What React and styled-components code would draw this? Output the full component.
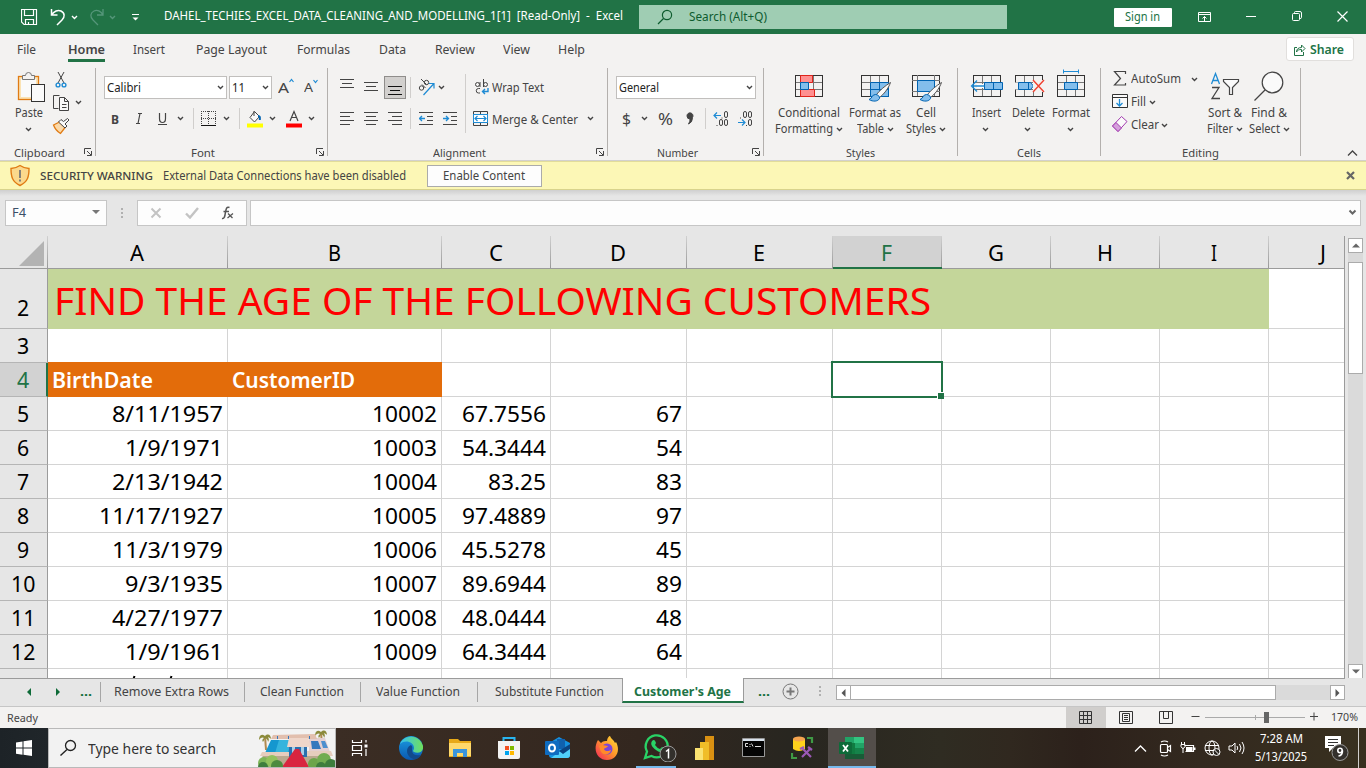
import React, { useLayoutEffect, useRef } from "react";
import styled, { createGlobalStyle, css } from "styled-components";

const Global = createGlobalStyle`
  * { box-sizing: border-box; }
  body { margin: 0; overflow: hidden; }
  svg { display: block; flex: none; }
`;

const ink = "#444444";
const green = "#217346";
const blue = "#1e8bd4";

const gap = css`margin-left: ${(p) => p.$ml || 0}px;`;

/* ---------- text ---------- */
const TextBox = styled.span`
  display: block;
  flex: none;
  width: ${(p) => p.$w}px;
  ${gap}
  margin-bottom: ${(p) => (p.$up || 0) * 2}px;
  height: ${(p) => Math.round(p.$size * 1.36)}px;
  line-height: ${(p) => Math.round(p.$size * 1.36)}px;
  font-size: ${(p) => p.$size}px;
  font-weight: ${(p) => p.$weight || 400};
  color: ${(p) => p.$color || "inherit"};
  white-space: pre;
`;
const Stretch = styled.span`
  display: inline-block;
  transform-origin: 0 50%;
`;
function Text({ w, size = 12, weight, color, ml, up, children }) {
  const ref = useRef(null);
  useLayoutEffect(() => {
    const el = ref.current;
    el.style.transform = "none";
    el.style.transform = `scaleX(${w / el.getBoundingClientRect().width})`;
  }, [w, children]);
  return (
    <TextBox $w={w} $size={size} $weight={weight} $color={color} $ml={ml} $up={up}>
      <Stretch ref={ref}>{children}</Stretch>
    </TextBox>
  );
}

/* ---------- icons ---------- */
const Svg = styled.svg`${gap}`;
function Icon({ x = 0, y = 0, w, h = 23, ml, stroke = ink, children }) {
  return (
    <Svg $ml={ml} width={w} height={h} viewBox={`${x} ${y} ${w} ${h}`} fill="none" stroke={stroke} strokeWidth="1">
      {children}
    </Svg>
  );
}
const Chevron = ({ ml, color = ink }) => (
  <Icon w={7} h={7} ml={ml} stroke={color}>
    <path d="M1 2l2.5 2.5L6 2" strokeWidth="1.4" />
  </Icon>
);

/* ---------- frame ---------- */
const Screen = styled.div`
  width: 1366px;
  height: 768px;
  display: flex;
  flex-direction: column;
  overflow: hidden;
  background: #e6e6e6;
  color: ${ink};
  font-family: "Noto Sans", "Open Sans", sans-serif;
`;
const TitleBar = styled.header`
  flex: none;
  height: 34px;
  background: ${green};
  color: #fff;
  display: flex;
  align-items: center;
`;
const SearchBox = styled.div`
  width: 368px;
  height: 24px;
  margin: 0 0 1px 16px;
  background: #9fcdb3;
  color: #0e5c2f;
  display: flex;
  align-items: center;
  padding-left: 18px;
`;
const SignIn = styled.button`
  width: 58px;
  height: 19px;
  margin: 0 0 0 107px;
  padding: 0 0 0 11px;
  border: 0;
  border-radius: 1px;
  background: #fff;
  color: ${green};
  font: inherit;
  display: flex;
  align-items: center;
`;

/* ---------- ribbon ---------- */
const Tabs = styled.nav`
  flex: none;
  height: 34px;
  background: #f3f2f1;
  display: flex;
  padding-left: 17px;
`;
const Tab = styled.div`
  height: 28px;
  padding-top: 8px;
  margin-right: ${(p) => p.$gap}px;
  border-bottom: 3px solid ${(p) => (p.$active ? green : "transparent")};
`;
const Share = styled.button`
  width: 68px;
  height: 24px;
  margin: 3px 0 0 701px;
  padding: 1px 0 0 7px;
  border: 1px solid #e1dfdd;
  border-radius: 3px;
  background: #fff;
  color: ${green};
  font: inherit;
  display: flex;
  align-items: center;
`;
const Ribbon = styled.section`
  flex: none;
  height: 93px;
  background: #f3f2f1;
  border-bottom: 1px solid #d2d0ce;
  display: flex;
`;
const Group = styled.div`
  flex: none;
  width: ${(p) => p.$w}px;
  height: 88px;
  border-right: 1px solid #b3b0ad;
  display: flex;
  flex-direction: column;
`;
const GroupBody = styled.div`
  flex: none;
  height: 76px;
  display: flex;
  align-items: flex-start;
  padding-left: ${(p) => p.$pl || 0}px;
`;
const GroupLabel = styled.div`
  flex: none;
  height: 16px;
  display: flex;
  align-items: center;
`;
const Stack = styled.div`
  display: flex;
  flex-direction: column;
  ${gap}
  padding-top: ${(p) => p.$pt || 0}px;
  gap: ${(p) => p.$gap || 0}px;
`;
const ToolRow = styled.div`
  height: 23px;
  display: flex;
  align-items: center;
  ${gap}
`;
const Combo = styled.div`
  width: ${(p) => p.$w}px;
  height: 23px;
  ${gap}
  padding-left: 2px;
  border: 1px solid #c1bfbd;
  background: #fff;
  color: #222;
  display: flex;
  align-items: center;
`;
const Toggle = styled.div`
  width: 22px;
  height: 23px;
  ${gap}
  border: 1px solid #8f8d8b;
  background: #d2d0ce;
  padding-left: 3px;
`;
const Divider = styled.i`
  width: 1px;
  height: ${(p) => p.$h || 21}px;
  ${gap}
  background: #d0cecc;
`;
const BigButton = styled.div`
  flex: none;
  width: ${(p) => p.$w}px;
  ${gap}
  display: flex;
  flex-direction: column;
  align-items: center;
`;
const BigLine = styled.div`
  height: 16px;
  display: flex;
  align-items: center;
`;
const ShortChevron = styled.div`
  padding-right: 2px;
`;
const Launcher = ({ ml }) => (
  <Icon w={8} h={8} ml={ml}>
    <path d="M.5 6V.5H7M3 3l4 4M7.5 3v4.5H3" />
  </Icon>
);
const Big = ({ w, ml, icon, lines }) => (
  <BigButton $w={w} $ml={ml}>
    {icon}
    {lines.map(([text, tw, chev], i) => (
      <BigLine key={i}>
        {text && <Text w={tw}>{text}</Text>}
        {chev && (text ? <Chevron ml={3} /> : <ShortChevron><Chevron /></ShortChevron>)}
      </BigLine>
    ))}
  </BigButton>
);

/* ---------- message bar and formula bar ---------- */
const Warning = styled.div`
  flex: none;
  height: 29px;
  background: #fcf7b6;
  border-bottom: 1px solid #d8d38c;
  border-top: 1px solid #e2dc9a;
  display: flex;
  align-items: center;
  padding-left: 9px;
`;
const EnableButton = styled.button`
  width: 115px;
  height: 22px;
  margin: 0 0 0 21px;
  padding: 0 0 0 15px;
  border: 1px solid #ababab;
  background: #fdfdfd;
  color: ${ink};
  font: inherit;
  display: flex;
  align-items: center;
`;
const FormulaBar = styled.div`
  flex: none;
  height: 46px;
  background: linear-gradient(#cfcfcf, #e6e6e6 6px);
  display: flex;
  padding: 10px 0 0 5px;
`;
const Field = styled.div`
  width: ${(p) => p.$w}px;
  height: 26px;
  ${gap}
  padding-left: ${(p) => p.$pl || 0}px;
  border: 1px solid #c6c6c6;
  background: #fdfdfd;
  display: flex;
  align-items: center;
`;

/* ---------- sheet ---------- */
const Sheet = styled.main`
  flex: none;
  height: 442px;
  display: flex;
`;
const Grid = styled.div`
  width: 1345px;
  overflow: hidden;
  border-right: 1px solid #9b9b9b;
  color: #000;
`;
const HeadRow = styled.div`
  width: 1378px;
  height: 33px;
  display: flex;
`;
const headLine = "linear-gradient(#d0d0d0, #999)";
const ColHead = styled.div`
  position: relative;
  width: ${(p) => p.$w}px;
  border-bottom: ${(p) => (p.$on ? `2px solid ${green}` : "1px solid #9b9b9b")};
  background: ${headLine} right / 1px 100% no-repeat, ${(p) => (p.$on ? "#d2d2d2" : "#e6e6e6")};
  color: ${(p) => (p.$on ? green : "#000")};
  display: flex;
  justify-content: center;
  align-items: center;
  padding: ${(p) => (p.$on ? 1 : 0)}px 2px 0 0;
`;
const Corner = styled.div`
  width: 48px;
  border-bottom: 1px solid #9b9b9b;
  background: ${headLine} right / 1px 100% no-repeat;
  padding: 5px 0 0 19px;
`;
const Row = styled.div`
  width: 1378px;
  height: ${(p) => p.$h}px;
  display: flex;
`;
const RowHead = styled.div`
  width: 48px;
  border-right: ${(p) => (p.$on ? `2px solid ${green}` : "1px solid #9b9b9b")};
  border-bottom: 1px solid #b5b5b5;
  background: ${(p) => (p.$on ? "#d2d2d2" : "#e6e6e6")};
  color: ${(p) => (p.$on ? green : "#000")};
  display: flex;
  justify-content: center;
  align-items: ${(p) => (p.$low ? "flex-end" : "center")};
  padding-bottom: ${(p) => (p.$low ? 4 : 0)}px;
`;
const Cell = styled.div`
  position: relative;
  width: ${(p) => p.$w}px;
  border-right: 1px solid #d4d4d4;
  border-bottom: 1px solid #d4d4d4;
  background: #fff;
  display: flex;
  justify-content: flex-end;
  align-items: center;
  padding-right: 4px;
`;
const Banner = styled.div`
  width: 1221px;
  background: #c4d69a;
  color: #ff0000;
  display: flex;
  align-items: center;
  padding: 1px 0 0 6px;
`;
const TableHead = styled.div`
  position: relative;
  width: ${(p) => p.$w}px;
  background: #e36c0a;
  box-shadow: 0 -1px #e36c0a;
  color: #fff;
  display: flex;
  align-items: center;
  padding-left: 4px;
`;
const Selection = styled.div`
  position: absolute;
  z-index: 2;
  inset: -2px;
  border: 2px solid ${green};
  &::after {
    content: "";
    position: absolute;
    right: -3px;
    bottom: -3px;
    width: 6px;
    height: 6px;
    background: ${green};
    border: solid #fff;
    border-width: 1px 0 0 1px;
  }
`;
const VScroll = styled.div`
  width: 15px;
  margin: 2px 0 0 3px;
  background: #dadada;
  display: flex;
  flex-direction: column;
`;
const ScrollPart = styled.div`
  flex: none;
  width: ${(p) => p.$w || 15}px;
  height: ${(p) => p.$h || 15}px;
  margin: ${(p) => p.$m || 0};
  border: 1px solid #ababab;
  background: #fff;
  display: flex;
  align-items: center;
  justify-content: center;
`;

/* ---------- sheet tabs and status ---------- */
const SheetBar = styled.div`
  flex: none;
  height: 29px;
  border-bottom: 1px solid #c6c6c6;
  background: linear-gradient(#9b9b9b, #9b9b9b) 0 0 / 1345px 1px no-repeat, #e6e6e6;
  display: flex;
  padding-left: 26px;
`;
const SheetNav = styled.div`
  width: 75px;
  height: 20px;
  margin-top: 4px;
  border-right: 1px solid #a6a6a6;
  display: flex;
  align-items: center;
`;
const SheetTab = styled.div`
  height: 20px;
  width: ${(p) => p.$w}px;
  margin-top: 4px;
  padding-left: ${(p) => p.$pl}px;
  border-right: ${(p) => (p.$last ? 0 : 1)}px solid #a6a6a6;
  display: flex;
  align-items: center;
`;
const ActiveTab = styled.div`
  width: 122px;
  height: 25px;
  padding: 4px 0 0 11px;
  background: #fff;
  border: solid #9b9b9b;
  border-width: 0 1px;
  border-bottom: 2px solid ${green};
  display: flex;
  align-items: center;
`;
const SheetTools = styled.div`
  height: 27px;
  display: flex;
  align-items: center;
`;
const HScroll = styled.div`
  width: 509px;
  height: 15px;
  ${gap}
  margin-top: 2px;
  background: #dadada;
  display: flex;
`;
const Status = styled.footer`
  flex: none;
  height: 21px;
  background: #f3f2f1;
  display: flex;
  align-items: center;
  padding-left: 7px;
`;
const ViewButton = styled.div`
  width: 40px;
  height: 21px;
  ${gap}
  background: ${(p) => (p.$on ? "#d0cecc" : "transparent")};
  display: flex;
  align-items: center;
  padding: 0 0 1px 13px;
`;

/* ---------- taskbar ---------- */
const Taskbar = styled.div`
  flex: none;
  height: 40px;
  background: linear-gradient(90deg, #1d2327 0, #20262a 48px, #3b2d24 336px, #33271f 640px, #282620 790px, #2f2c22 940px, #30281f 1010px, #2c211b 1080px, #33291f 1200px, #38301f 1366px);
  color: #fff;
  display: flex;
`;
const Start = styled.div`
  width: 48px;
  display: flex;
  align-items: center;
  justify-content: center;
`;
const TaskSearch = styled.div`
  width: 288px;
  border: 1px solid #b9b9b9;
  background: #f2f2f2;
  color: #333;
  display: flex;
  align-items: center;
  padding-left: 10px;
`;
const Task = styled.div`
  width: 48px;
  height: 40px;
  ${gap}
  background: ${(p) => (p.$on ? "#534e4a" : "transparent")};
  border-bottom: 2px solid ${(p) => (p.$on ? "#76b9ed" : "transparent")};
  display: flex;
  align-items: center;
  justify-content: center;
  padding: 1px 1px 0 0;
`;
const RunningTask = styled(Task)`
  background: linear-gradient(#76b9ed, #76b9ed) 4px 38px / 40px 2px no-repeat border-box;
`;
const Tray = styled.div`
  flex: 1;
  display: flex;
  align-items: center;
`;
const Clock = styled.div`
  width: 54px;
  ${gap}
  display: flex;
  flex-direction: column;
  align-items: center;
  gap: 2px;
`;

/* table grid shared by the Styles and Cells icons */
const TableGlyph = ({ x, y = 75.5, w = 27, h = 21 }) => (
  <g>
    <path d={`M${x} ${y + h / 3}h${w}M${x} ${y + (2 * h) / 3}h${w}M${x + w / 3} ${y}v${h}M${x + (2 * w) / 3} ${y}v${h}`} stroke="#777" />
    <rect x={x} y={y} width={w} height={h} stroke="#333" />
  </g>
);
const BrushGlyph = ({ x }) => (
  <g transform={`translate(${x} 0)`}>
    <path d="M29.500 82.500c-5 3-11 8-14 12l3 3c4-3 9-9 11-15z" fill="#fafafa" stroke="#555" />
    <path d="M14.500 94.500c-4 0-3 4-6.500 5 4 2.500 9 2 10.500-1 .5-2-1.500-4-4-4z" fill="#83beec" stroke="#0063b1" />
  </g>
);
const cols = [["A", 180], ["B", 214], ["C", 109], ["D", 136], ["E", 146], ["F", 109], ["G", 109], ["H", 109], ["I", 109], ["J", 109]];
const data = [
  [5, "8/11/1957", 111, "10002", "67.7556", 84, "67"],
  [6, "1/9/1971", 98, "10003", "54.3444", 84, "54"],
  [7, "2/13/1942", 111, "10004", "83.25", 58, "83"],
  [8, "11/17/1927", 124, "10005", "97.4889", 84, "97"],
  [9, "11/3/1979", 111, "10006", "45.5278", 84, "45"],
  [10, "9/3/1935", 98, "10007", "89.6944", 84, "89"],
  [11, "4/27/1977", 111, "10008", "48.0444", 84, "48"],
  [12, "1/9/1961", 98, "10009", "64.3444", 84, "64"],
];
const Num = ({ n }) => <Text size={22} up={1} w={String(n).length * 12.2}>{String(n)}</Text>;
const Empty = ({ from, to = 10, selected }) =>
  cols.slice(from, to).map(([c, w]) => <Cell key={c} $w={w}>{selected === c && <Selection />}</Cell>);
const ribbonTabs = [
  ["File", 19, 32], ["Home", 37, 28], ["Insert", 32, 31], ["Page Layout", 71, 30], ["Formulas", 53, 29],
  ["Data", 27, 29], ["Review", 40, 28], ["View", 27, 28], ["Help", 27, 0],
];

const Palm = ({ x, y }) => (
  <g stroke="none">
    <path d={`M${x} ${y}l1 14h2l-1-14z`} fill="#b08a50" />
    <path d={`M${x + 1} ${y}c-4-3-6 0-6 4 2-3 4-3 5-2-2 1-2 3-1 4 1-2 2-3 2-4 2 1 3 2 3 4 2-3 0-5-1-5 2 0 3 1 4 2 0-4-3-6-6-3z`} fill="#8b8a3a" />
  </g>
);

export default function App() {
  return (
    <Screen>
      <Global />
      <TitleBar>
        <Icon w={17} h={17} ml={21} stroke="#fff">
          <path d="M.5.5h15v15H3L.5 13zM3.500.5v6h9v-6M4.500 15.500v-5h8v5M7.500 13v2.500" strokeWidth="1.2" />
        </Icon>
        <Icon w={16} h={18} ml={12} stroke="#fff">
          <path d="M1.500 1v6h6M1.500 7C4 3 8 1.500 11 3c4 2 4 6 1 9l-5 5" strokeWidth="1.5" />
        </Icon>
        <Chevron ml={5} color="#fff" />
        <Icon w={16} h={18} ml={11} stroke="#55967a">
          <path d="M14 1v6H8M14 7C12 3 8 1.500 5 3c-4 2-4 6-1 9l5 5" strokeWidth="1.3" />
        </Icon>
        <Chevron ml={4} color="#55967a" />
        <Icon w={9} h={9} ml={15} stroke="#fff">
          <path d="M1 1.500h7" /><path d="M1.500 4.500h6l-3 3z" fill="#fff" stroke="none" />
        </Icon>
        <Text w={459} ml={24} up={1}>{"DAHEL_TECHIES_EXCEL_DATA_CLEANING_AND_MODELLING_1[1]  [Read-Only]  -  Excel"}</Text>
        <SearchBox>
          <Icon w={17} h={16} stroke="#0e5c2f">
            <circle cx="10" cy="6" r="4.600" strokeWidth="1.2" /><path d="M6.500 9.500L1 15" strokeWidth="1.2" />
          </Icon>
          <Text w={78} ml={15}>Search (Alt+Q)</Text>
        </SearchBox>
        <SignIn><Text w={35}>Sign in</Text></SignIn>
        <Icon w={14} h={11} ml={26} stroke="#fff">
          <path d="M.5.5h12v9H.5zM.5 2.500h12M6.500 9V4.500M4.500 6.500l2-2 2 2" />
        </Icon>
        <Icon w={10} h={13} ml={34} stroke="#fff"><path d="M0 5.500h10" /></Icon>
        <Icon w={11} h={13} ml={36} stroke="#fff">
          <rect x=".5" y="2.500" width="7" height="7" rx="1" /><path d="M2.500 2V1.500q0-1 1-1H8q1.500 0 1.500 1.500v4.500q0 1-1.500 1" />
        </Icon>
        <Icon w={11} h={13} ml={34} stroke="#fff"><path d="M.5.5l10 10M10.500.5l-10 10" strokeWidth="1.2" /></Icon>
      </TitleBar>

      <Tabs>
        {ribbonTabs.map(([t, w, g]) => (
          <Tab key={t} $gap={g} $active={t === "Home"}><Text w={w} weight={t === "Home" ? 600 : 400}>{t}</Text></Tab>
        ))}
        <Share>
          <Icon w={12} h={12} stroke={green}>
            <path d="M3 3.500H.5v8h9V8M2.500 8c0-3 2-4.500 5-4.500V1L11 4.500 7.500 8V5.500C5 5.500 3.500 6 2.500 8z" />
          </Icon>
          <Text w={34} weight={600} ml={4}>Share</Text>
        </Share>
      </Tabs>

      <Ribbon>
        <Group $w={96}>
          <GroupBody $pl={12}>
            <Big w={34} lines={[["Paste", 28], ["", 0, true]]} icon={
              <Icon x={12} y={68} w={34} h={37}>
                <rect x="18.500" y="76.500" width="20" height="23" fill="#fbe3b4" stroke="#e07b14" strokeWidth="1.300" />
                <rect x="21" y="79" width="15" height="18" fill="#fafafa" stroke="none" />
                <path d="M22.500 79.500v-4h3q0-3 3-3t3 3h3v4z" fill="#f3f2f1" stroke="#777" />
                <rect x="31.500" y="84.500" width="13" height="17" fill="#fafafa" stroke="#333" />
              </Icon>} />
            <Stack $ml={6}>
              <ToolRow>
                <Icon x={52} y={68} w={18}>
                  <path d="M58 72l6 11M64 72l-6 11" />
                  <circle cx="58" cy="85" r="1.900" stroke={blue} strokeWidth="1.400" /><circle cx="64" cy="85" r="1.900" stroke={blue} strokeWidth="1.400" />
                </Icon>
              </ToolRow>
              <ToolRow>
                <Icon x={52} y={91} w={18}>
                  <path d="M58.500 108.500h-5v-13h6" />
                  <path d="M59.500 97.500h5l4 4v9h-9zM64.500 97.500v4h4M62 104.500h4.500M62 107.500h4.500" fill="#fafafa" />
                </Icon>
                <Chevron ml={5} />
              </ToolRow>
              <ToolRow>
                <Icon x={52} y={114} w={18}>
                  <path d="M53.500 125l6-3 6 5-5 6.500q-5-3-7-8.500z" fill="#fbd9a8" stroke="#e07b14" strokeWidth="1.300" />
                  <path d="M58.500 122l6.500 6 2-2-2-2 4-4-1.500-1.500-4 3-2.500-2z" fill="#fafafa" />
                </Icon>
              </ToolRow>
            </Stack>
          </GroupBody>
          <GroupLabel><Text w={51} ml={14} size={11}>Clipboard</Text><Launcher ml={19} /></GroupLabel>
        </Group>

        <Group $w={232}>
          <GroupBody $pl={8}>
            <Stack $pt={8} $gap={8}>
              <ToolRow>
                <Combo $w={123}><Text w={34}>Calibri</Text><Chevron ml={76} /></Combo>
                <Combo $w={43} $ml={2}><Text w={13}>11</Text><Chevron ml={17} /></Combo>
                <Text w={11} size={15} ml={6} up={1}>A</Text>
                <Icon x={289} y={76} w={6} stroke={blue}><path d="M289.500 82l2-2.500 2 2.500" strokeWidth="1.200" /></Icon>
                <Text w={9} size={13} ml={9} up={1}>A</Text>
                <Icon x={312} y={76} w={6}  stroke={blue}><path d="M312.500 80l2 2.500 2-2.500" strokeWidth="1.200" /></Icon>
              </ToolRow>
              <ToolRow>
                <Text w={8} ml={7} size={13} weight={700}>B</Text>
                <Icon x={134} y={107} w={10} ml={15}><path d="M138 113.500h4M136 123.500h4M140 113.500l-2 10" strokeWidth="1.200" /></Icon>
                <Icon x={157} y={107} w={11} ml={13}><path d="M159.500 113v5.500q0 4 3 4t3-4V113M158 124.500h9" strokeWidth="1.200" /></Icon>
                <Chevron ml={9} />
                <Divider $ml={9} />
                <Icon x={201} y={107} w={16} ml={7}>
                  <path d="M201 111.500h15M201.500 111v14M215.500 111v14M208.500 111v14M201 118.500h15" strokeDasharray="1 1" />
                  <path d="M201 125.500h15" stroke="#111" />
                </Icon>
                <Chevron ml={6} />
                <Divider $ml={9} />
                <Icon x={247} y={107} w={16} ml={7}>
                  <path d="M254.500 111.500l5 5-5 5.500-4.500-4.500zM254 111v5" fill="#fafafa" />
                  <path d="M258 116c2 0 2 1 1.800 4" stroke="#0063b1" strokeWidth="2" />
                  <path d="M247 125.500h16" stroke="#ffff00" strokeWidth="4" />
                </Icon>
                <Chevron ml={6} />
                <Icon x={286} y={107} w={16} ml={10}>
                  <path d="M290 121l4-9.500 4 9.500M291.500 117.500h5" strokeWidth="1.200" />
                  <path d="M286 125.500h16" stroke="#ff0000" strokeWidth="4" />
                </Icon>
                <Chevron ml={6} />
              </ToolRow>
            </Stack>
          </GroupBody>
          <GroupLabel><Text w={24} ml={95} size={11}>Font</Text><Launcher ml={101} /></GroupLabel>
        </Group>

        <Group $w={280}>
          <GroupBody $pl={12}>
            <Stack $pt={8} $gap={8}>
              <ToolRow>
                <Icon x={340} y={76} w={14}><path d="M340 79.500h14M342 83.500h10M340 87.500h14" /></Icon>
                <Icon x={364} y={76} w={14} ml={10}><path d="M364 82.500h14M366 86.500h10M364 90.500h14" /></Icon>
                <Toggle $ml={6}><Icon x={388} y={77} w={15} h={21} stroke="#111"><path d="M388 86.500h14M390 90.500h10M388 94.500h14" /></Icon></Toggle>
                <Divider $ml={4} />
                <Icon x={418} y={76} w={17} ml={7}>
                  <path d="M423.500 95l10-11M429 83.500h5v5" stroke={blue} strokeWidth="1.200" />
                  <circle cx="421.500" cy="88" r="2.200" /><path d="M422 84.500l3.500 3.500" />
                  <circle cx="426.500" cy="82.500" r="2.200" /><path d="M421 79l5.500 5.500" />
                </Icon>
                <Chevron ml={3} />
              </ToolRow>
              <ToolRow>
                <Icon x={340} y={107} w={14}><path d="M340 112.500h14M340 116.500h10M340 120.500h14M340 124.500h10" /></Icon>
                <Icon x={364} y={107} w={14} ml={10}><path d="M364 112.500h14M366 116.500h10M364 120.500h14M366 124.500h10" /></Icon>
                <Icon x={388} y={107} w={14} ml={10}><path d="M388 112.500h14M392 116.500h10M388 120.500h14M392 124.500h10" /></Icon>
                <Divider $ml={8} />
                <Icon x={419} y={107} w={14} ml={8}>
                  <path d="M419 112.500h14M427 116.500h6M427 120.500h6M419 124.500h14" />
                  <path d="M425 118.500h-5.500M422 116l-2.500 2.500L422 121" stroke={blue} strokeWidth="1.300" />
                </Icon>
                <Icon x={443} y={107} w={14} ml={10}>
                  <path d="M443 112.500h14M451 116.500h6M451 120.500h6M443 124.500h14" />
                  <path d="M443 118.500h5.500M446 116l2.500 2.500L446 121" stroke={blue} strokeWidth="1.300" />
                </Icon>
              </ToolRow>
            </Stack>
            <Stack $ml={8} $pt={6}><Divider $h={59} /></Stack>
            <Stack $ml={7} $pt={8} $gap={8}>
              <ToolRow>
                <Icon x={473} y={76} w={17}>
                  <circle cx="477.500" cy="84.500" r="2" /><path d="M480 82v5M483.500 79v8M480 93h-1.500a2 2 0 0 1 0-4.500h1.500" />
                  <circle cx="485.500" cy="84.500" r="2" />
                  <path d="M488 88v3.500h-5.500M485 89l-2.500 2.500L485 94" stroke={blue} strokeWidth="1.400" />
                </Icon>
                <Text w={52} ml={2}>Wrap Text</Text>
              </ToolRow>
              <ToolRow>
                <Icon x={473} y={107} w={17}>
                  <path d="M473.500 111.500h14v14h-14zM480.500 111v3M480.500 123v3" />
                  <rect x="473.500" y="114.500" width="14" height="8" fill="#fff" stroke={blue} />
                  <path d="M475 118.500h11M477.500 116l-2.500 2.500 2.500 2.500M483.500 116l2.500 2.500-2.500 2.500" stroke={blue} strokeWidth="1.200" />
                </Icon>
                <Text w={86} ml={2} up={-1}>{"Merge & Center"}</Text>
                <Chevron ml={9} />
              </ToolRow>
            </Stack>
          </GroupBody>
          <GroupLabel><Text w={53} ml={105} size={11}>Alignment</Text><Launcher ml={110} /></GroupLabel>
        </Group>

        <Group $w={156}>
          <GroupBody $pl={8}>
            <Stack $pt={8} $gap={8}>
              <ToolRow><Combo $w={140}><Text w={40}>General</Text><Chevron ml={87} /></Combo></ToolRow>
              <ToolRow>
                <Text w={9} size={16} ml={6}>$</Text>
                <Chevron ml={10} />
                <Text w={15} size={16} ml={10}>%</Text>
                <Icon x={685} y={107} w={11} ml={12}>
                  <path d="M687 116a3 3 0 1 1 5.500 1.500q0 5-4 6.500 2-3 1.500-5-3 0-3-3z" fill={ink} />
                </Icon>
                <Divider $ml={9} />
                <Icon x={712} y={107} w={18} ml={6}>
                  <path d="M721 115.500h-7M717 112.500l-3 3 3 3" stroke={blue} strokeWidth="1.200" />
                  <rect x="724.500" y="111.500" width="3" height="6" rx="1.500" /><rect x="719.500" y="119.500" width="3" height="6" rx="1.500" /><rect x="724.500" y="119.500" width="3" height="6" rx="1.500" />
                  <path d="M721.500 118h1M716.500 125.500h1" />
                </Icon>
                <Icon x={736} y={107} w={18} ml={6}>
                  <path d="M738 122.500h7M742 119.500l3 3-3 3" stroke={blue} strokeWidth="1.200" />
                  <rect x="743.500" y="111.500" width="3" height="6" rx="1.500" /><rect x="748.500" y="111.500" width="3" height="6" rx="1.500" /><rect x="748.500" y="119.500" width="3" height="6" rx="1.500" />
                  <path d="M740 118h1M746 125.500h1" />
                </Icon>
              </ToolRow>
            </Stack>
          </GroupBody>
          <GroupLabel><Text w={41} ml={49} size={11}>Number</Text><Launcher ml={54} /></GroupLabel>
        </Group>

        <Group $w={194}>
          <GroupBody $pl={9}>
            <Big w={71} lines={[["Conditional", 62], ["Formatting", 58, true]]} icon={
              <Icon x={773} y={68} w={71} h={37}>
                <TableGlyph x={795.5} />
                <path d="M800.500 75.500h12v7h-12zM800.500 89.500h14v7h-14z" fill="#ff9090" stroke="#e0241b" />
                <path d="M800.500 82.500h8v7h-8z" fill="#83beec" stroke="#0063b1" />
              </Icon>} />
            <Big w={54} ml={4} lines={[["Format as", 52], ["Table", 27, true]]} icon={
              <Icon x={848} y={68} w={54} h={37}>
                <TableGlyph x={861.5} />
                <path d="M870.500 82.500h18v14h-18zM870.500 89.500h18M879.500 82.500v14" fill="#83beec" stroke="#0063b1" />
                <BrushGlyph x={861} />
              </Icon>} />
            <Big w={44} ml={2} lines={[["Cell", 20], ["Styles", 30, true]]} icon={
              <Icon x={905} y={68} w={44} h={37}>
                <rect x="913.500" y="75.500" width="27" height="21" stroke="#333" />
                <path d="M913 80.500h28M913 91.500h28M918.500 75v21M935.500 75v21" stroke="#777" />
                <path d="M918.500 80.500h17v11h-17z" fill="#83beec" stroke="#0063b1" />
                <BrushGlyph x={913} />
              </Icon>} />
          </GroupBody>
          <GroupLabel><Text w={29} ml={82} size={11}>Styles</Text></GroupLabel>
        </Group>

        <Group $w={143}>
          <GroupBody $pl={10}>
            <Big w={37} lines={[["Insert", 29], ["", 0, true]]} icon={
              <Icon x={968} y={68} w={37} h={37}>
                <TableGlyph x={973.5} />
                <path d="M984.500 82.500h18v7h-18zM993.500 82.500v7" fill="#83beec" stroke="#0063b1" />
                <path d="M977 84h7v4h-7z" fill="#fff" stroke="none" />
                <path d="M984.500 86h-12M977 80.500l-5.500 5.500 5.500 5.500" stroke={blue} strokeWidth="1.300" />
              </Icon>} />
            <Big w={37} ml={5} lines={[["Delete", 33], ["", 0, true]]} icon={
              <Icon x={1010} y={68} w={37} h={37}>
                <TableGlyph x={1015.5} />
                <path d="M1014 82.500h14v7h-14z" fill="#f3f2f1" stroke="none" />
                <path d="M1018.500 82.500h12l3 3.500-3 3.500h-12zM1028.500 82.500v7" fill="#83beec" stroke="#0063b1" />
                <path d="M1033 80h12v12h-12z" fill="#f3f2f1" stroke="none" />
                <path d="M1033 80l11 12M1044 80l-11 12" stroke="#f0402f" strokeWidth="1.400" />
              </Icon>} />
            <Big w={42} ml={3} lines={[["Format", 38], ["", 0, true]]} icon={
              <Icon x={1050} y={68} w={42} h={37}>
                <path d="M1063 71.500h15M1063.500 69.500v4M1078.500 69.500v4" stroke={blue} />
                <TableGlyph x={1057.5} />
                <path d="M1064.500 82.500h13v7h-13z" fill="#83beec" stroke="#0063b1" />
              </Icon>} />
          </GroupBody>
          <GroupLabel><Text w={24} ml={59} size={11}>Cells</Text></GroupLabel>
        </Group>

        <Group $w={200}>
          <GroupBody $pl={10}>
            <Stack>
              <ToolRow>
                <Icon x={1111} y={68} w={18}><path d="M1125.500 74v-2.500h-11l6 7-6 6.500h11V83" strokeWidth="1.200" /></Icon>
                <Text w={50} ml={2} up={1}>AutoSum</Text><Chevron ml={10} />
              </ToolRow>
              <ToolRow>
                <Icon x={1111} y={91} w={18}>
                  <path d="M1112.500 94.500h15v13h-15zM1112 97.500h16" fill="#fafafa" stroke="#333" />
                  <path d="M1119.500 99v7M1116.500 103l3 3 3-3" stroke={blue} strokeWidth="1.300" />
                </Icon>
                <Text w={15} ml={2} up={1}>Fill</Text><Chevron ml={3} />
              </ToolRow>
              <ToolRow>
                <Icon x={1111} y={114} w={18}>
                  <path d="M1112.500 126l9-9.500 5.500 5-9 10z" fill="#fafafa" stroke="#a33bb0" />
                  <path d="M1112.500 126l3.500-3.500 5.500 5.500-3.500 3.500z" fill="#d5a0dc" stroke="#a33bb0" />
                </Icon>
                <Text w={28} ml={2} up={1}>Clear</Text><Chevron ml={2} />
              </ToolRow>
            </Stack>
            <Big w={40} ml={7} lines={[["Sort &", 34], ["Filter", 26, true]]} icon={
              <Icon x={1205} y={68} w={40} h={37}>
                <path d="M1211.500 84l4-10.500 4 10.500M1213 80.500h5" stroke={blue} strokeWidth="1.300" />
                <path d="M1212 87.500h7l-7 11h8" strokeWidth="1.300" />
                <path d="M1223.500 79.500h15v2l-6 6v7h-3v-7l-6-6z" fill="#fafafa" strokeWidth="1.200" />
              </Icon>} />
            <Big w={42} ml={3} lines={[["Find &", 36], ["Select", 31, true]]} icon={
              <Icon x={1248} y={68} w={42} h={37}>
                <circle cx="1272.500" cy="82.500" r="10.300" fill="#fafafa" strokeWidth="1.200" /><path d="M1265 90l-10.500 10.500" strokeWidth="1.300" />
              </Icon>} />
          </GroupBody>
          <GroupLabel><Text w={37} ml={81} size={11}>Editing</Text></GroupLabel>
        </Group>
        <Stack $ml={46} $pt={81}><Icon w={11} h={8}><path d="M1 6.500l4.500-4.500L10 6.500" strokeWidth="1.300" /></Icon></Stack>
      </Ribbon>

      <Warning>
        <Icon w={22} h={23}>
          <path d="M11 1.500c3 2 6 3 9 3 0 8-1 13-9 17-8-4-9-9-9-17 3 0 6-1 9-3z" fill="#fbd98c" stroke="#e07b14" strokeWidth="1.400" />
          <path d="M11 6v8M11 15.500v2" stroke="#777" strokeWidth="1.800" />
        </Icon>
        <Text w={113} ml={9} size={11.5} weight={500}>SECURITY WARNING</Text>
        <Text w={243} ml={10} size={12}>External Data Connections have been disabled</Text>
        <EnableButton><Text w={82}>Enable Content</Text></EnableButton>
        <Icon w={9} h={9} ml={804} stroke="#666"><path d="M1 1l7 7M8 1L1 8" strokeWidth="2.200" /></Icon>
      </Warning>
      <FormulaBar>
        <Field $w={102} $pl={6}>
          <Text w={14} color="#3b5068">F4</Text>
          <Icon w={8} h={8} ml={66}><path d="M0 1h8L4 5z" fill="#777" stroke="none" /></Icon>
        </Field>
        <Icon w={4} h={26} ml={13}><path d="M2 8v2M2 12v2M2 16v2" stroke="#b0b0b0" strokeWidth="2" /></Icon>
        <Field $w={110} $ml={13} $pl={12}>
          <Icon w={12} h={12}><path d="M1.500 1.500l9 9M10.500 1.500l-9 9" stroke="#c3c3c3" strokeWidth="2" /></Icon>
          <Icon w={14} h={12} ml={23}><path d="M1 6.500l4 4L13 1" stroke="#c3c3c3" strokeWidth="2.400" /></Icon>
          <Icon w={13} h={16} ml={22} stroke="#555">
            <path d="M8.500 2.500C5 1 5 5 4 10q-.7 4-3 3.500M2.500 6.500H8" strokeWidth="1.500" /><path d="M7 8.500l4.500 4.500M12 8.500L6.500 13" strokeWidth="1.300" />
          </Icon>
        </Field>
        <Field $w={1111} $ml={3} $pl={1097}><Icon w={9} h={9}><path d="M1.500 1.500l3 3 3-3" stroke="#666" strokeWidth="2" /></Icon></Field>
      </FormulaBar>

      <Sheet>
        <Grid>
          <HeadRow>
            <Corner><Icon w={26} h={26}><path d="M25 0v25H0z" fill="#b3b3b3" stroke="none" /></Icon></Corner>
            {cols.map(([c, w]) => (
              <ColHead key={c} $w={w} $on={c === "F"}>
                <Text size={22} w={{ A: 14, B: 13, C: 14, D: 16, E: 12, F: 11, G: 16, H: 16, I: 6, J: 6 }[c]}>{c}</Text>
              </ColHead>
            ))}
          </HeadRow>
          <Row $h={60}>
            <RowHead $low><Num n={2} /></RowHead>
            <Banner><Text w={877} size={39}>FIND THE AGE OF THE FOLLOWING CUSTOMERS</Text></Banner>
            <Empty from={9} />
          </Row>
          <Row $h={34}><RowHead><Num n={3} /></RowHead><Empty from={0} /></Row>
          <Row $h={34}>
            <RowHead $on><Num n={4} /></RowHead>
            <TableHead $w={180}><Text w={101} size={21} weight={600}>BirthDate</Text></TableHead>
            <TableHead $w={214}><Text w={123} size={21} weight={600}>CustomerID</Text></TableHead>
            <Empty from={2} selected="F" />
          </Row>
          {data.map(([n, date, dw, id, age, aw, whole]) => (
            <Row key={n} $h={34}>
              <RowHead><Num n={n} /></RowHead>
              <Cell $w={180}><Text w={dw} size={22} up={1}>{date}</Text></Cell>
              <Cell $w={214}><Text w={65} size={22} up={1}>{id}</Text></Cell>
              <Cell $w={109}><Text w={aw} size={22} up={1}>{age}</Text></Cell>
              <Cell $w={136}><Text w={26} size={22} up={1}>{whole}</Text></Cell>
              <Empty from={4} />
            </Row>
          ))}
          <Row $h={34}>
            <RowHead />
            <Cell $w={180}><Icon w={94} h={33} stroke="#000"><path d="M5.500 7l-1 3M42.500 7l-1 3" strokeWidth="2" /></Icon></Cell>
            <Empty from={1} />
          </Row>
        </Grid>
        <VScroll>
          <ScrollPart><Icon w={8} h={5}><path d="M0 4.500h8L4 .5z" fill="#666" stroke="none" /></Icon></ScrollPart>
          <ScrollPart $h={112} $m="9px 0 290px" />
          <ScrollPart><Icon w={8} h={5}><path d="M0 .5h8L4 4.500z" fill="#666" stroke="none" /></Icon></ScrollPart>
        </VScroll>
      </Sheet>

      <SheetBar>
        <SheetNav>
          <Icon w={6} h={8}><path d="M5 0v8L1 4z" fill="#0e6b38" stroke="none" /></Icon>
          <Icon w={6} h={8} ml={23}><path d="M1 0v8l4-4z" fill="#0e6b38" stroke="none" /></Icon>
          <Text w={12} ml={19} weight={700} color="#0e6b38">...</Text>
        </SheetNav>
        <SheetTab $w={144} $pl={13}><Text w={115}>Remove Extra Rows</Text></SheetTab>
        <SheetTab $w={116} $pl={15}><Text w={84}>Clean Function</Text></SheetTab>
        <SheetTab $w={117} $pl={15}><Text w={84}>Value Function</Text></SheetTab>
        <SheetTab $w={144} $pl={17} $last><Text w={109}>Substitute Function</Text></SheetTab>
        <ActiveTab><Text w={97} weight={700} color={green}>Customer's Age</Text></ActiveTab>
        <SheetTools>
          <Text w={12} ml={14} weight={700} color="#0e6b38">...</Text>
          <Icon w={17} h={17} ml={12} stroke="#777"><circle cx="8.500" cy="8.500" r="7.500" /><path d="M8.500 4.500v8M4.500 8.500h8" strokeWidth="2" /></Icon>
          <Icon w={4} h={11} ml={19}><path d="M2 0v2M2 4v2M2 8v2" stroke="#b0b0b0" strokeWidth="2" /></Icon>
          <HScroll $ml={14}>
            <ScrollPart><Icon w={5} h={8}><path d="M4.500 0v8L.5 4z" fill="#555" stroke="none" /></Icon></ScrollPart>
            <ScrollPart $w={426} $m="0 54px 0 -1px" />
            <ScrollPart><Icon w={5} h={8}><path d="M.5 0v8l4-4z" fill="#555" stroke="none" /></Icon></ScrollPart>
          </HScroll>
        </SheetTools>
      </SheetBar>
      <Status>
        <Text w={31} size={11}>Ready</Text>
        <ViewButton $on $ml={1028}><Icon w={13} h={13} stroke="#333"><path d="M.5.5h12v12H.5zM4.500.5v12M8.500.5v12M.5 4.500h12M.5 8.500h12" /></Icon></ViewButton>
        <ViewButton><Icon w={14} h={13} stroke="#333"><path d="M.5.5h13v12H.5zM3.500 2.500h7v8h-7zM5 4.500h4M5 6.500h4M5 8.500h4" /></Icon></ViewButton>
        <ViewButton><Icon w={14} h={13} stroke="#333"><path d="M.5.5h13v12H.5zM4.500.5v7h5v-7" /></Icon></ViewButton>
        <Icon w={128} h={13} x={1190} y={711} ml={4}>
          <path d="M1191.500 716.500h8M1310 716.500h8M1314 712.500v8" />
          <path d="M1205 717.500h100M1255.500 715v5" stroke="#aaa" /><path d="M1264 712h5v11h-5z" fill="#666" stroke="none" />
        </Icon>
        <Text w={27} size={11} ml={13} up={1}>170%</Text>
      </Status>

      <Taskbar>
        <Start><Icon w={16} h={16}><path d="M0 2.500l6.500-1v6H0zM7.500 1.300L16 0v7.500H7.500zM0 8.500h6.500v6.200L0 13.700zM7.500 8.500H16V16l-8.500-1.200z" fill="#fff" stroke="none" /></Icon></Start>
        <TaskSearch>
          <Icon w={19} h={18} stroke="#222"><circle cx="11.500" cy="6.500" r="5" strokeWidth="1.300" /><path d="M8 10.500L1.500 16.500" strokeWidth="1.400" /></Icon>
          <Text w={128} size={15} ml={10}>Type here to search</Text>
          <Icon w={80} h={38} ml={39}>
            <g stroke="none">
              <path d="M8 26h66l4 12H4z" fill="#b9a98f" />
              <Palm x={9} y={7} /><Palm x={65} y={3} />
              <path d="M16 11h20v13H10z" fill="#1597cf" /><path d="M24 11h12l-3 13h-13z" fill="#35b4dd" />
              <path d="M54 9h16l5 14H54z" fill="#e4cfd0" /><path d="M56 12h7l3 8h-9z" fill="#3478bd" /><path d="M66 12h4l3 7h-5z" fill="#4c8fce" />
              <path d="M18 6l42-1 2 5H16z" fill="#e2bfae" /><path d="M34 9h19l3 9H32z" fill="#efd6ca" /><path d="M22 7h1v3h-1zM33 7h1v3h-1zM54 7h1v3h-1z" fill="#3478bd" />
              <path d="M34 18h18v10H34z" fill="#2a6fae" /><path d="M37 18h3v8h-3zM46 18h3v8h-3z" fill="#a9cfe8" />
              <path d="M7 23h27v4H5zM52 22h24l2 5H52z" fill="#e6cdbd" />
              <path d="M40 20h4l10 18H27z" fill="#d9243f" />
              <circle cx="9" cy="34" r="6" fill="#7db557" /><circle cx="17" cy="32" r="6" fill="#93c25e" /><circle cx="22" cy="37" r="6" fill="#4d8b3f" /><circle cx="8" cy="38" r="5" fill="#3f7d3d" />
              <circle cx="59" cy="35" r="6" fill="#6ca54a" /><circle cx="69" cy="31" r="7" fill="#72ac50" /><circle cx="76" cy="36" r="6" fill="#3f7d3d" /><circle cx="66" cy="38" r="5" fill="#3f7d3d" />
            </g>
          </Icon>
        </TaskSearch>
        <Task>
          <Icon w={17} h={16} stroke="#fff"><path d="M1.500 0v2.500h9V0M1.500 5.500h9v5h-9zM1.500 16v-2.500h9V16M15 0v2.500M15 9v7" strokeWidth="1.200" /><path d="M13.500 4.500h3v3h-3z" fill="#fff" stroke="none" /></Icon>
        </Task>
        <Task $ml={3}>
          <Icon w={24} h={24}>
            <defs>
              <linearGradient id="eg" x1="0" x2="1"><stop offset="0" stopColor="#35c1f1" /><stop offset="1" stopColor="#6fe05c" /></linearGradient>
              <linearGradient id="eb" x1="0" x2="0" y2="1"><stop offset="0" stopColor="#1b9de2" /><stop offset="1" stopColor="#0b58b0" /></linearGradient>
            </defs>
            <circle cx="12" cy="12" r="12" fill="url(#eb)" stroke="none" />
            <path d="M1 8C4-1 20-3 24 10c1 6-5 8-9 6-2-1 0-2 0-4 0-6-9-9-14-4z" fill="url(#eg)" stroke="none" />
            <path d="M12 9c-7 3-4 14 4 14 3 0 5-2 6-4-4 1-9 0-9-5 0-2 1-3-1-5z" fill="#114a8b" stroke="none" />
          </Icon>
        </Task>
        <Task $ml={1}>
          <Icon w={22} h={20}><g stroke="none"><path d="M0 1h9l2 2h11v16H0z" fill="#e8a917" /><path d="M0 5h22v13H0z" fill="#ffd96b" /><path d="M4 11h14v8h-4v-4H8v4H4z" fill="#3a95dc" /></g></Icon>
        </Task>
        <Task $ml={1}>
          <Icon w={24} h={24}><path d="M6.500 6V2h11v4" stroke="#28b5f0" strokeWidth="2" /><g stroke="none"><path d="M1 5h22v16q0 2-2 2H3q-2 0-2-2z" fill="#f3f3f3" /><path d="M8 10h4v4H8z" fill="#f25022" /><path d="M13 10h4v4h-4z" fill="#7fba00" /><path d="M8 15h4v4H8z" fill="#00a4ef" /><path d="M13 15h4v4h-4z" fill="#ffb900" /></g></Icon>
        </Task>
        <Task $ml={1}>
          <Icon w={25} h={23}><g stroke="none"><path d="M4 7l10-6 11 6v12q0 3-3 3H7q-3 0-3-3z" fill="#1490df" /><path d="M12 3h8v10h-8z" fill="#1061ae" /><path d="M25 8v11q0 3-3 3H6z" fill="#50d0fa" /><path d="M25 8L14 15l4 3 7-5z" fill="#0a4381" /><rect y="5" width="14" height="14" rx="1" fill="#0f6cc0" /></g><ellipse cx="7" cy="12" rx="3" ry="3.600" stroke="#fff" strokeWidth="2" /></Icon>
        </Task>
        <Task $ml={1}>
          <Icon w={23} h={24}>
            <defs><linearGradient id="ff" x1="1" x2="0" y2="1"><stop offset="0" stopColor="#ffe23b" /><stop offset=".45" stopColor="#ff9a2a" /><stop offset="1" stopColor="#f2205c" /></linearGradient></defs>
            <path d="M3 4l3 3c2-2 4-2 6-2 0-3 2-5 3-5 1 3 4 4 5 7l1-1c5 9 0 18-9 18C3 24-3 14 3 4z" fill="url(#ff)" stroke="none" />
            <circle cx="12" cy="13" r="5.500" fill="#7a45d8" stroke="none" /><path d="M4 10c4-2 6 0 9 0-1 2-4 2-4 3 1 3 5 2 7 1-1 6-10 6-11-1z" fill="#ff8a2a" stroke="none" />
          </Icon>
        </Task>
        <RunningTask $ml={1}>
          <Icon w={34} h={29} ml={9}>
            <path d="M2 25l2-6.500A11 11 0 1 1 8.500 23z" stroke="#29d366" strokeWidth="2.300" />
            <path d="M9 8c2-2 3-1 4 2l-1 2q2 3 5 4l2-2c3 1 4 2 3 3-2 3-5 3-9 0S7 11 9 8z" fill="#29d366" stroke="none" />
            <circle cx="25" cy="21" r="8" fill="#33302c" stroke="#999" /><path d="M23 18.500l2.500-2v9" stroke="#fff" strokeWidth="1.500" />
          </Icon>
        </RunningTask>
        <Task $ml={1}>
          <Icon w={20} h={24}><g stroke="none"><path d="M10 0h9v24h-9z" fill="#d99012" /><path d="M5 6h9v18H5z" fill="#f0bd28" /><path d="M0 12h8v12H0z" fill="#fae271" /></g></Icon>
        </Task>
        <Task $ml={1}>
          <Icon w={23} h={19}><path d="M.5.5h22v18H.5z" fill="#050505" stroke="#999" /><path d="M1 1h21v2H1z" fill="#d9e2ec" stroke="none" /><path d="M6 5.500H3.500v3H6M8 6v1M8 8v1M9.500 5.500l1.500 3M13 8.500h6" stroke="#ddd" /></Icon>
        </Task>
        <Task $ml={1}>
          <Icon w={23} h={24}>
            <path d="M2 3v10q6 4 12 0V3z" fill="#ffd21c" stroke="none" /><ellipse cx="8" cy="3" rx="6" ry="2.500" fill="#f5a44f" stroke="none" />
            <path d="M16 2h5v5M1 17v5h5" stroke="#3f9a45" strokeWidth="2.200" />
            <path d="M11 12l9 9M20 12l-9 9M9 13l4-2M17 11l4 3" stroke="#9b59b6" strokeWidth="2.200" />
          </Icon>
        </Task>
        <Task $ml={1} $on>
          <Icon w={25} h={22}><g stroke="none"><path d="M6 0h19v22H6z" fill="#21a366" /><path d="M15 0h10v6H15z" fill="#33c481" /><path d="M6 6h10v11H6z" fill="#107c41" /><path d="M6 17h19v5H6z" fill="#185c37" /><path d="M16 11h9v6h-9z" fill="#15834a" /><rect y="5" width="13" height="12" rx="1" fill="#0d6b39" /></g><path d="M4 8l5 6.500M9 8l-5 6.500" stroke="#fff" strokeWidth="1.800" /></Icon>
        </Task>
        <Tray>
          <Icon w={13} h={9} ml={258} stroke="#fff"><path d="M1 7.500l5.500-5.500L12 7.500" strokeWidth="1.300" /></Icon>
          <Icon w={14} h={17} ml={12} stroke="#fff"><rect x="1.500" y="4.500" width="7" height="8" rx="1" strokeWidth="1.200" /><path d="M8.500 7.500l3-2v6l-3-2M2 2q3.500-2 7 0M2 15q3.500 2 7 0" strokeWidth="1.200" /></Icon>
          <Icon w={16} h={12} ml={7} stroke="#fff"><path d="M4.500 3.500h9v6h-8" strokeWidth="1.200" /><path d="M6 5h6.500v4H6zM14 5.500h1.500v2.500H14z" fill="#fff" stroke="none" /><path d="M1.500 0v2M4.500 0v2M1 2.500h4v2q-1 2-2 2t-2-2zM3 6v5" /></Icon>
          <Icon w={18} h={17} ml={8} stroke="#fff"><circle cx="8" cy="8" r="7" /><ellipse cx="8" cy="8" rx="3" ry="7" /><path d="M1 5.500h14M1 10.500h8" /><circle cx="12.500" cy="12" r="3.500" fill="#2c2822" /><path d="M10 9.500l5 5" /></Icon>
          <Icon w={17} h={14} ml={6} stroke="#fff"><path d="M1 5h3l3-3v10L4 9H1zM9 5q1.500 2 0 4M11.500 3q3 4 0 8M14 1q4 6 0 12" /></Icon>
          <Clock $ml={9}>
            <Text w={43} size={12}>7:28 AM</Text>
            <Text w={52} size={12}>5/13/2025</Text>
          </Clock>
          <Icon w={26} h={26} ml={16} stroke="#fff">
            <path d="M1 1h16v12h-8l-4 4v-4H1z" fill="#fff" stroke="none" /><path d="M4 4.500h10M4 7.500h10M4 10.500h6" stroke="#333" />
            <circle cx="16" cy="17.500" r="8" fill="#33302c" stroke="#999" />
            <circle cx="16" cy="15.500" r="2.200" strokeWidth="1.600" /><path d="M18.500 15.500q0 5-4 5.500" strokeWidth="1.600" />
          </Icon>
          <Divider $ml={8} $h={40} />
        </Tray>
      </Taskbar>
    </Screen>
  );
}
